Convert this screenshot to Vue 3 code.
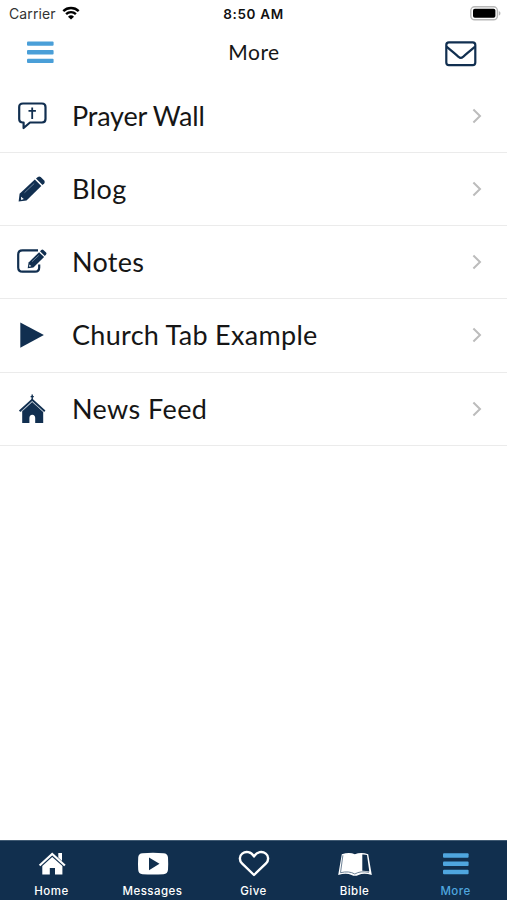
<template>
    <div class="screen">
        <div class="status-bar">
            <div class="carrier">
                <span class="carrier-name">Carrier</span>
                <svg class="wifi" viewBox="0 0 18 14">
                    <path d="M1.3 5.2a11 11 0 0 1 15.4 0" />
                    <path d="M4.1 8.1a7 7 0 0 1 9.8 0" />
                    <path class="dot" d="M9 13.6 6 10.7a4.3 4.3 0 0 1 6 0Z" />
                </svg>
            </div>
            <span class="clock">8:50 AM</span>
            <svg class="battery" viewBox="0 0 31 15">
                <rect class="shell" x="0.8" y="0.8" width="26.6" height="13" rx="3.8" />
                <rect class="charge" x="3" y="2.8" width="22.4" height="9" rx="1.8" />
                <path class="cap" d="M28.8 5c2.2.8 2.2 3.8 0 4.6Z" />
            </svg>
        </div>

        <header class="nav-bar">
            <button class="nav-button" aria-label="Menu">
                <svg class="menu-icon" viewBox="0 0 27 23">
                    <rect v-for="y in [0.4, 9.1, 17.8]" :key="y" :y="y" width="26.6" height="4.3" rx="1" />
                </svg>
            </button>
            <h1>More</h1>
            <button class="nav-button right" aria-label="Inbox">
                <svg class="mail-icon" viewBox="0 0 32 26">
                    <rect x="1.3" y="1.3" width="29" height="22.8" rx="2.6" />
                    <path d="M1.5 5.6c4 3.3 8.2 7 12 10.2q2.3 2.3 4.6 0c3.8-3.2 8-6.9 12-10.2" />
                </svg>
            </button>
        </header>

        <ul class="menu">
            <li v-for="item in items" :key="item.label">
                <svg class="item-icon" viewBox="0 0 32 32">
                    <g v-if="item.icon === 'prayer'">
                        <path
                            class="line"
                            d="M7 3.5H26Q29.5 3.5 29.5 7V19Q29.5 22.5 26 22.5H14L7.6 28V22.5H7Q3.2 22.5 3.2 19V7Q3.2 3.5 7 3.5Z"
                        />
                        <path class="cross" d="M16.2 7.5V19M12.5 10.8H19.9" />
                    </g>
                    <g v-else-if="item.icon === 'pencil'">
                        <path d="M2.6 28.6 3.6 20.8 18.8 6.5 25.3 12.9 10.5 27.5Z" />
                        <path d="M20 5.5 21.9 3.9Q23.3 2.8 24.7 4.1L28.2 7.5Q29.4 9 28.2 10.4L26.5 11.9Z" />
                        <path class="cut" d="M8.5 19.7 18.2 10.5" />
                        <path class="nib" d="M5 23.7 7.8 26 5.2 27Z" />
                    </g>
                    <g v-else-if="item.icon === 'notes'">
                        <path class="line" d="M22 4.3H6.5Q2.2 4.3 2.2 8.5V21.5Q2.2 25.7 6.5 25.7H19Q23.2 25.7 23.2 21.5V18.5" />
                        <path d="M11.7 22.2 12.6 16.4 23.1 6.2 28.1 11.1 17.4 21.5Z" />
                        <path d="m24 5.2 1.3-1.2q1.1-1 2.1 0l2.7 2.6q.9 1 0 2l-1.3 1.4Z" />
                        <path class="cut" d="M16 15.7 22.7 9.5" />
                        <path class="nib" d="M13.2 18.6 15.3 20.1 13.4 21Z" />
                    </g>
                    <path v-else-if="item.icon === 'play'" d="M4.3 3.4 27.9 16 4.3 28.8Z" />
                    <g v-else>
                        <path class="spire" d="M16.2 1.5V8M14.6 3.6H17.8" />
                        <path class="roof" d="M3.6 18.2 16.2 6.7 28.8 18.2" />
                        <path d="M16.2 8.9 27.2 18.9V30H19.2V25Q19.2 22.2 16.3 21.8 13.4 22.2 13.4 25V30H6.2V18.2Z" />
                        <path class="cut" d="M5.5 18.4 16.2 8.6 26.9 18.4" />
                    </g>
                </svg>
                <span class="label" :style="{ letterSpacing: item.spacing }">{{ item.label }}</span>
                <svg class="chevron" viewBox="0 0 10 16">
                    <path d="M1.4 1.5 8 8 1.4 14.5" />
                </svg>
            </li>
        </ul>

        <nav class="tab-bar">
            <a v-for="tab in tabs" :key="tab" :class="{ active: tab === 'More' }">
                <svg class="tab-icon" viewBox="0 0 36 28">
                    <g v-if="tab === 'Home'">
                        <path class="roof" d="M5.6 15.5 18.2 4 30.9 15.5" />
                        <path d="M24.3 3H28V11L24.3 7.6Z" />
                        <path d="M18.2 6.9 28.4 16V24.5H21V18H15.8V24.5H8.3V16Z" />
                    </g>
                    <path
                        v-else-if="tab === 'Messages'"
                        fill-rule="evenodd"
                        d="M7.5 3.2Q18 2.4 28.5 3.2 32.7 3.4 33 7.5 33.4 13.7 33 19.8 32.7 24 28.5 24.2 18 25 7.5 24.2 3.4 24 3.2 19.8 2.8 13.7 3.2 7.5 3.4 3.4 7.5 3.2ZM14 7.4V20.2L24.5 13.8Z"
                    />
                    <path
                        v-else-if="tab === 'Give'"
                        class="heart"
                        d="M18 25 6 13.4C3 10.4 3.3 5.8 6.2 3.6 9.8.8 15 1.6 18 6.4 21 1.6 26.2.8 29.8 3.6 32.7 5.8 33 10.4 30 13.4Z"
                    />
                    <g v-else-if="tab === 'Bible'">
                        <path d="M4.8 4.3Q12.5 1.5 17.8 4.3 24 1.5 31.2 4.3L34.8 25Q27 22.8 21.5 24.9 18 26.6 14.5 24.9 9 22.8 1.2 25Z" />
                        <path class="fold" d="M5.9 5.3 3.5 22.7Q12 20.6 17.8 24 23.5 20.6 31.9 22.4" />
                        <path class="page" d="M25.3 4.5Q28 4.3 30 5L32.3 21.6Q28.5 20.6 25.3 20.7Z" />
                    </g>
                    <g v-else>
                        <rect v-for="y in [3.2, 11.4, 19.7]" :key="y" x="5" :y="y" width="25.6" height="4.5" rx="1" />
                    </g>
                </svg>
                <span>{{ tab }}</span>
            </a>
        </nav>
    </div>
</template>

<script setup>
const items = [
    { label: 'Prayer Wall', icon: 'prayer', spacing: '-0.2px' },
    { label: 'Blog', icon: 'pencil', spacing: '0.5px' },
    { label: 'Notes', icon: 'notes', spacing: '0.3px' },
    { label: 'Church Tab Example', icon: 'play', spacing: '0.3px' },
    { label: 'News Feed', icon: 'church', spacing: '0.4px' },
];

const tabs = ['Home', 'Messages', 'Give', 'Bible', 'More'];
</script>

<style>
body {
    background: #fff;
}
</style>

<style scoped>
.screen {
    display: flex;
    flex-direction: column;
    height: 900px;
    overflow: hidden;
    background: #fff;
    color: #161616;
    font-family: Lato, sans-serif;
}
svg {
    display: block;
    flex: none;
}
.status-bar {
    display: grid;
    grid-template-columns: 1fr auto 1fr;
    align-items: center;
    height: 27px;
    padding: 0 6px 0 9px;
    font-family: Inter, sans-serif;
    font-size: 13.5px;
    box-sizing: border-box;
}
.carrier {
    display: flex;
    align-items: center;
    gap: 6px;
}
.carrier-name {
    color: #333;
    font-size: 14px;
    letter-spacing: 0.1px;
}
.wifi {
    width: 18px;
    height: 14px;
    margin-top: -1px;
    fill: none;
    stroke: #000;
    stroke-width: 2.4;
}
.wifi .dot {
    fill: #000;
    stroke: none;
}
.clock {
    margin-left: -3px;
    color: #111;
    font-weight: 600;
    letter-spacing: 0.65px;
}
.battery {
    justify-self: end;
    width: 31px;
    height: 15px;
}
.shell {
    fill: #fff;
    stroke: #b8b8b8;
    stroke-width: 1.4;
}
.charge {
    fill: #000;
}
.cap {
    fill: #b8b8b8;
}
.nav-bar {
    display: grid;
    grid-template-columns: 1fr auto 1fr;
    align-items: center;
    height: 52px;
    padding: 0 30px 0 27px;
}
.nav-button {
    padding: 0;
    border: 0;
    background: none;
}
.nav-button:first-child {
    padding-bottom: 1px;
}
.nav-button.right {
    justify-self: end;
}
.menu-icon {
    width: 27px;
    height: 23px;
    fill: #4a9fd8;
}
.mail-icon {
    width: 32px;
    height: 26px;
    margin-top: 2px;
    fill: none;
    stroke: #112f50;
    stroke-width: 2.2;
}
h1 {
    margin: 0;
    padding: 0 0 4px 4px;
    font-size: 21px;
    font-weight: 400;
    letter-spacing: 0.5px;
}
.menu {
    flex: 1;
    margin: 0;
    padding: 0.4px 0 0;
    list-style: none;
}
.menu li {
    display: flex;
    align-items: center;
    height: 73.3px;
    padding: 0 24px 0 16px;
    border-bottom: 1.5px solid #ebebeb;
    box-sizing: border-box;
}
.item-icon {
    width: 32px;
    height: 32px;
    fill: #112f50;
}
.line {
    fill: none;
    stroke: #112f50;
    stroke-width: 2.2;
    stroke-linejoin: round;
}
.cross {
    stroke: #112f50;
    stroke-width: 1.8;
}
.cut {
    fill: none;
    stroke: #8fa3b8;
    stroke-width: 0.7;
}
.nib {
    fill: #fff;
}
.spire {
    stroke: #112f50;
    stroke-width: 1.4;
}
.item-icon .roof {
    fill: none;
    stroke: #112f50;
    stroke-width: 1.9;
}
.label {
    flex: 1;
    padding-left: 24px;
    font-size: 27px;
    line-height: 32px;
    white-space: nowrap;
}
.chevron {
    width: 10px;
    height: 16px;
    margin-right: 1px;
    fill: none;
    stroke: #bcbcbc;
    stroke-width: 2;
}
.tab-bar {
    display: grid;
    grid-template-columns: repeat(5, 101px);
    height: 60px;
    padding-left: 1px;
    background: #112f4e;
    box-sizing: border-box;
    border-top: 1px solid #405a73;
}
.tab-bar a {
    display: flex;
    flex-direction: column;
    align-items: center;
    padding-top: 9px;
    color: #fff;
    font-family: Inter, sans-serif;
    font-size: 11.5px;
    font-weight: 500;
    line-height: 15px;
    letter-spacing: 0.45px;
}
.tab-bar a span {
    padding-top: 6px;
}
.tab-bar .active {
    color: #4fa6df;
}
.tab-icon {
    width: 36px;
    height: 28px;
    fill: currentColor;
}
.tab-icon .roof {
    fill: none;
    stroke: currentColor;
    stroke-width: 2.2;
}
.heart {
    fill: none;
    stroke: currentColor;
    stroke-width: 2.4;
    stroke-linejoin: round;
}
.fold {
    fill: none;
    stroke: #5d748a;
    stroke-width: 0.9;
}
.page {
    fill: #112f4e;
}
</style>
